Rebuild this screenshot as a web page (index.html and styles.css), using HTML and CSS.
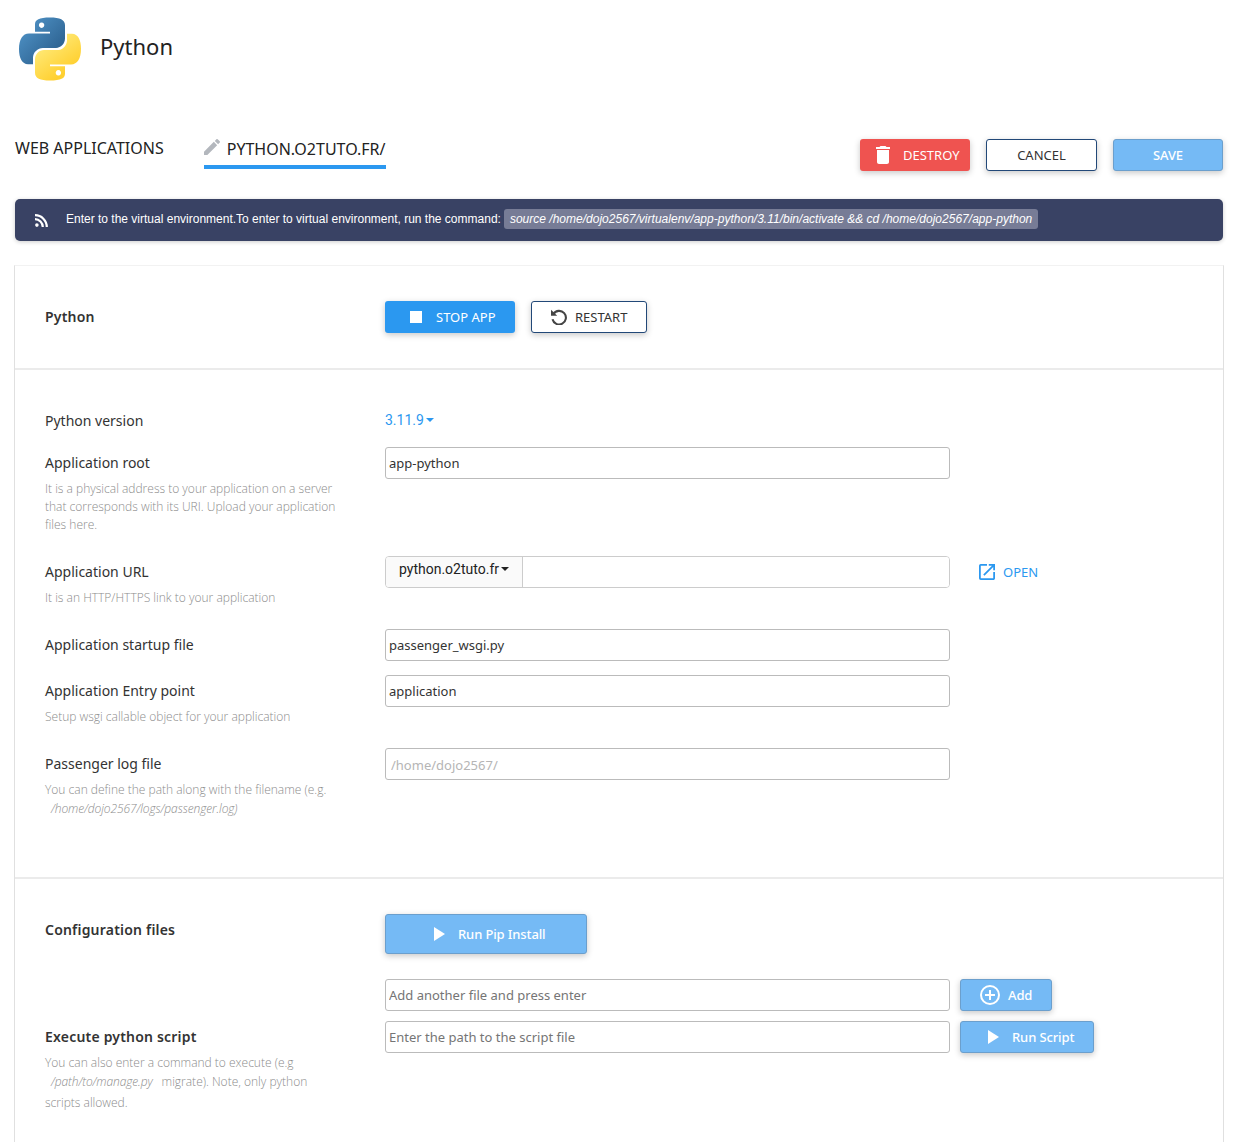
FILE: index.html
```html
<!DOCTYPE html>
<html lang="en">
<head>
<meta charset="utf-8">
<title>Python</title>
<link rel="stylesheet" href="styles.css">
</head>
<body>
<header class="header">
  <svg class="logo" viewBox="18 16.7 64 64">
    <defs>
      <linearGradient id="blue" gradientUnits="userSpaceOnUse" x1="24" y1="20" x2="56" y2="50"><stop offset="0" stop-color="#5094c8"/><stop offset="1" stop-color="#2f6594"/></linearGradient>
      <linearGradient id="yellow" gradientUnits="userSpaceOnUse" x1="57" y1="51" x2="37" y2="24"><stop offset="0" stop-color="#ffe873"/><stop offset="1" stop-color="#ffd031"/></linearGradient>
      <path id="snake" fill-rule="evenodd" d="M35 31.4V24C35 19.5 39 17.2 50 17.2C60 17.2 65 19.5 65 25V38C65 43.5 61 47.6 56 47.6H43C37.500 47.600 33 52 33 57.500V64H28C22 64 19 57.500 19 49C19 39.500 22.500 33.300 29 33.300H50V31.400ZM41.600 22.200a2.700 2.700 0 1 0 .01 0Z"/>
    </defs>
    <use href="#snake" fill="url(#blue)"/>
    <use href="#snake" fill="url(#yellow)" transform="rotate(180 50 48.7)"/>
  </svg>
  <h1 class="title">Python</h1>
</header>

<nav class="toolbar">
  <div class="tabs">
    <a class="tab"><span class="t-web">WEB APPLICATIONS</span></a>
    <a class="tab tab-active">
      <svg class="i16" viewBox="3 3 18 18"><path d="M3 17.250V21h3.750L17.810 9.940l-3.750-3.750L3 17.250zM20.710 7.040a1 1 0 0 0 0-1.410l-2.340-2.340a1 1 0 0 0-1.410 0l-1.830 1.830 3.750 3.750 1.830-1.830z"/></svg>
      <span class="t-tab">PYTHON.O2TUTO.FR/</span>
    </a>
  </div>
  <div class="actions">
    <button class="btn btn-red"><svg class="i24" viewBox="0 0 24 24"><path d="M6 19c0 1.100.9 2 2 2h8c1.100 0 2-.9 2-2V7H6v12zM19 4h-3.500l-1-1h-5l-1 1H5v2h14V4z"/></svg><span>DESTROY</span></button>
    <button class="btn btn-line btn-cancel"><span>CANCEL</span></button>
    <button class="btn btn-light btn-save"><span>SAVE</span></button>
  </div>
</nav>

<div class="notice">
  <svg class="i13" viewBox="0 0 13 13"><circle cx="1.900" cy="11.100" r="1.800"/><path d="M0 5.200a7.800 7.800 0 0 1 7.800 7.800M0 1.200a11.800 11.800 0 0 1 11.800 11.800" fill="none" stroke="#fff" stroke-width="2.200"/></svg>
  <span class="notice-text">Enter to the virtual environment.To enter to virtual environment, run the command:</span>
  <code class="cmd">source /home/dojo2567/virtualenv/app-python/3.11/bin/activate &amp;&amp; cd /home/dojo2567/app-python</code>
</div>

<main class="card">
  <section class="section s-app">
    <div class="row">
      <div class="label"><b>Python</b></div>
      <div class="control control-gap">
        <button class="btn btn-blue"><svg class="i24" viewBox="0 0 24 24"><path d="M6 6h12v12H6z"/></svg><span>STOP APP</span></button>
        <button class="btn btn-line btn-restart"><svg class="i16" viewBox="0 0 16 16"><path d="M2.500 4.800A6.800 6.800 0 1 1 1.500 10.300" fill="none" stroke="#444" stroke-width="2.100"/><path d="M0 .8V6.700H6.200Z"/></svg><span>RESTART</span></button>
      </div>
    </div>
  </section>

  <section class="section s-settings">
    <div class="row r-version">
      <div class="label">Python version</div>
      <div class="control"><a class="version">3.11.9<i class="caret"></i></a></div>
    </div>
    <div class="row r-root">
      <div class="label">Application root<p class="hint">It is a physical address to your application on a server<br>that corresponds with its URI. Upload your application<br>files here.</p></div>
      <div class="control"><input class="field" value="app-python"></div>
    </div>
    <div class="row r-tall">
      <div class="label">Application URL<p class="hint">It is an HTTP/HTTPS link to your application</p></div>
      <div class="control">
        <div class="group"><button class="domain">python.o2tuto.fr<i class="caret"></i></button><input class="path" value=""></div>
        <a class="open"><svg class="i16" viewBox="3 3 18 18"><path d="M19 19H5V5h7V3H5a2 2 0 0 0-2 2v14a2 2 0 0 0 2 2h14c1.100 0 2-.9 2-2v-7h-2v7zM14 3v2h3.590l-9.830 9.830 1.410 1.410L19 6.410V10h2V3h-7z"/></svg><span>OPEN</span></a>
      </div>
    </div>
    <div class="row r-startup">
      <div class="label">Application startup file</div>
      <div class="control"><input class="field" value="passenger_wsgi.py"></div>
    </div>
    <div class="row r-tall">
      <div class="label">Application Entry point<p class="hint">Setup wsgi callable object for your application</p></div>
      <div class="control"><input class="field" value="application"></div>
    </div>
    <div class="row">
      <div class="label">Passenger log file<p class="hint">You can define the path along with the filename (e.g.</p><p class="hint hint-path"><em>/home/dojo2567/logs/passenger.log)</em></p></div>
      <div class="control"><input class="field field-log" placeholder="/home/dojo2567/"></div>
    </div>
  </section>

  <section class="section s-config">
    <div class="row r-config">
      <div class="label"><b>Configuration files</b></div>
      <div class="control"><button class="btn btn-light btn-pip"><svg class="i24" viewBox="0 0 24 24"><path d="M8 5v14l11-7z"/></svg><span>Run Pip Install</span></button></div>
    </div>
    <div class="row r-add">
      <div class="label"></div>
      <div class="control"><input class="field" placeholder="Add another file and press enter"><button class="btn btn-light btn-add"><svg class="i24" viewBox="0 0 24 24"><path d="M13 7h-2v4H7v2h4v4h2v-4h4v-2h-4V7zm-1-5a10 10 0 1 0 0 20 10 10 0 0 0 0-20zm0 18a8 8 0 1 1 0-16 8 8 0 0 1 0 16z"/></svg><span>Add</span></button></div>
    </div>
    <div class="row">
      <div class="label"><b>Execute python script</b><p class="hint">You can also enter a command to execute (e.g</p><p class="hint hint-path"><em>/path/to/manage.py</em><span class="after-path">migrate). Note, only python</span></p><p class="hint hint-last">scripts allowed.</p></div>
      <div class="control"><input class="field" placeholder="Enter the path to the script file"><button class="btn btn-light btn-run"><svg class="i24" viewBox="0 0 24 24"><path d="M8 5v14l11-7z"/></svg><span>Run Script</span></button></div>
    </div>
  </section>
</main>
</body>
</html>
```
FILE: styles.css
```css
* { box-sizing: border-box; }
body {
  margin: 0;
  height: 1142px;
  overflow: hidden;
  display: flex;
  flex-direction: column;
  background: #fff;
  color: #333;
  font: 14px/20px "Noto Sans", sans-serif;
}
button, input { font: inherit; color: inherit; margin: 0; outline: none; }
svg { display: block; flex: none; fill: currentColor; }
.i24 { width: 24px; height: 24px; }
.i16 { width: 16px; height: 16px; }
.i13 { width: 13px; height: 13px; }

.header { display: flex; align-items: center; gap: 18px; height: 139px; padding: 0 0 42px 18px; flex: none; }
.logo { width: 64px; height: 64px; }
.title { margin: 0 0 6px; font-size: 22px; line-height: 30px; font-weight: 400; color: #222; }

.toolbar { display: flex; justify-content: space-between; height: 60px; padding: 0 13px 0 15px; flex: none; }
.tabs { display: flex; gap: 40px; height: 30px; font-size: 16px; color: #222; }
.tab { display: flex; align-items: flex-start; line-height: 18px; }
.tab-active { gap: 7px; line-height: 20px; border-bottom: 4px solid #2b98f0; }
.tab-active svg { color: #b3b7bd; }
.t-web, .t-tab { white-space: nowrap; }
.actions { display: flex; gap: 16px; }

.btn {
  display: flex;
  align-items: center;
  justify-content: center;
  height: 32px;
  padding: 0;
  border: 1px solid transparent;
  border-radius: 3px;
  font-size: 13px;
  white-space: nowrap;
  color: #fff;
  box-shadow: 0 2px 6px rgba(0, 0, 0, .22);
}
.btn-red { width: 110px; gap: 8px; background: #ef5350; justify-content: flex-start; padding-left: 10px; }
.btn-blue { width: 130px; gap: 8px; background: #2b98f0; justify-content: flex-start; padding-left: 18px; }
.btn-line { background: #fff; border-color: #224878; color: #333; }
.btn-cancel { width: 111px; }
.btn-restart { width: 116px; gap: 8px; justify-content: flex-start; padding-left: 19px; }
.btn-restart svg { color: #444; }
.btn-light { background: #75baf5; border-color: #6b9fcd; font-weight: 500; letter-spacing: -.12px; }
.btn-save { width: 110px; }
.btn-pip { width: 202px; height: 40px; gap: 8px; justify-content: flex-start; padding-left: 40px; }
.btn-add { width: 92px; gap: 6px; margin-left: 10px; justify-content: flex-start; padding-left: 17px; }
.btn-run { width: 134px; gap: 8px; margin-left: 10px; justify-content: flex-start; padding-left: 19px; }

.notice {
  display: flex;
  align-items: center;
  flex: none;
  height: 42px;
  margin: 0 13px 24px 15px;
  padding: 0 20px;
  border-radius: 5px;
  background: #394264;
  color: #fff;
  box-shadow: 0 1px 4px rgba(0, 0, 0, .2);
  font: 12px/20px "Liberation Sans", Arial, sans-serif;
}
.notice-text { margin: 0 3px 2px 18px; white-space: nowrap; }
.cmd { margin-bottom: 2px; padding: 0 6px; border-radius: 3px; background: #777c96; font: italic 12px/20px "Liberation Sans", Arial, sans-serif; letter-spacing: .01px; white-space: nowrap; }

.card { flex: 1; margin: 0 12px 0 14px; border: 1px solid #e0e0e0; border-top-color: #f2f2f2; border-bottom: 0; }
.section { padding: 35px 30px 0; border-bottom: 2px solid #ebebeb; }
.s-app { height: 104px; }
.s-settings { height: 509px; }
.s-config { border: 0; }

.row { display: grid; grid-template-columns: 340px 1fr; }
.label { line-height: 32px; color: #333; }
.label b { font-weight: 600; letter-spacing: .2px; }
.control { display: flex; align-items: flex-start; }
.control-gap { gap: 16px; }
.r-version { height: 42px; }
.r-root { height: 109px; }
.r-tall { height: 73px; }
.r-startup { height: 46px; }
.r-config { height: 65px; }
.r-add { height: 42px; }

.hint { margin: 0; font: 300 12px/18px "Open Sans", sans-serif; color: #8c8c8c; white-space: nowrap; }
.hint:first-of-type { margin-top: 1px; }
.hint-path { padding: 1px 0 0 6px; }
.hint em { letter-spacing: -.11px; }
.after-path { margin-left: 9px; }
.hint-last { margin-top: 3px; }

.version { display: flex; align-items: center; height: 30px; color: #2b98f0; font-family: Roboto, sans-serif; }
.caret { width: 0; height: 0; margin-left: 2px; border: 4px solid transparent; border-top-color: currentColor; border-bottom: 0; }

.field { width: 565px; height: 32px; padding: 0 3px 1px; border: 1px solid #bbb; border-radius: 3px; background: #fff; font-size: 13px; }
.field::placeholder { color: #757575; opacity: 1; }
.field-log { padding: 2px 5px 0; }
.field-log::placeholder { color: #b5b5b5; }

.group { display: flex; width: 565px; height: 32px; border: 1px solid #ccc; border-radius: 4px; overflow: hidden; }
.domain { display: flex; align-items: center; width: 137px; padding: 0 0 6px 13px; border: 0; border-right: 1px solid #ccc; background: #fafafa; color: #222; font-family: Roboto, sans-serif; font-size: 14px; }
.path { flex: 1; min-width: 0; border: 0; background: #fff; }
.open { display: flex; align-items: center; gap: 8px; height: 32px; margin-left: 29px; color: #2b98f0; font-size: 13px; }
```
